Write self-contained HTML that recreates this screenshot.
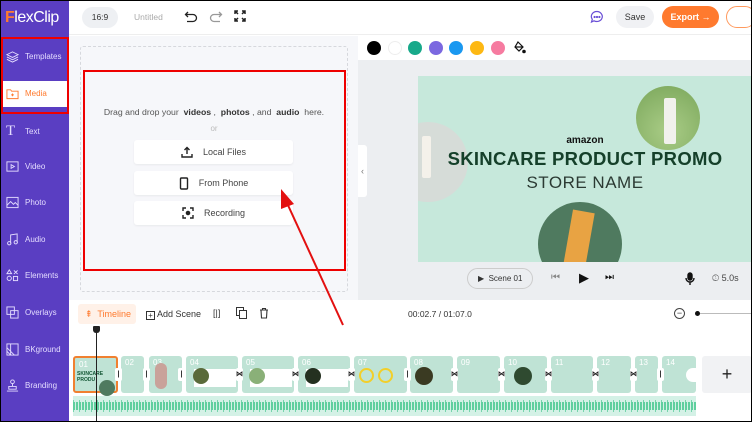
<!DOCTYPE html>
<html><head><meta charset="utf-8"><style>
*{box-sizing:border-box;margin:0;padding:0}
body{width:752px;height:422px;overflow:hidden;font-family:"Liberation Sans",sans-serif;background:#fff;position:relative;font-size:9px;color:#333}
.a{position:absolute}
.side{left:0;top:0;width:69px;height:422px;background:#5a3ec2}
.si{position:absolute;left:6px;color:#e4dcff;font-size:8px;display:flex;align-items:center;gap:6px}
.si svg{width:13px;height:13px}
.th{position:absolute;top:356px;height:37px;background:#bfe3d5;border-radius:3px}
.th span{position:absolute;left:4px;top:2px;color:#fff;font-size:8px}
.cut{position:absolute;top:368px;width:7px;height:13px;background:#fff;border-radius:2px;font-size:7px;text-align:center;line-height:13px;color:#222;font-weight:bold}
.btn{position:absolute;left:134px;width:159px;height:24px;background:#fff;border-radius:3px;box-shadow:0 1px 2px rgba(0,0,0,.06);font-size:9px;color:#444;display:flex;align-items:center;justify-content:center;gap:10px}
.dot{position:absolute;top:41px;width:14px;height:14px;border-radius:50%}
</style></head><body>
<div class="a" style="inset:0;border:1px solid #000;z-index:20;pointer-events:none"></div>
<div class="a side"></div>
<div class="a" style="left:5px;top:9px;font-size:16px;color:#fff;letter-spacing:-0.5px"><span style="color:#ff7a2e;font-weight:bold">F</span>lexClip</div>
<div class="a" style="left:3px;top:81px;width:64px;height:26px;background:#fff"></div>
<div class="si" style="top:50px"><svg viewBox="0 0 14 14" fill="none" stroke="#e4dcff"><path d="M7 2L13 5 7 8 1 5z M1 7.5L7 10.5 13 7.5 M1 10L7 13 13 10"/></svg>Templates</div>
<div class="si" style="top:87px;color:#ff7a2e"><svg viewBox="0 0 14 14" fill="none" stroke="#ff7a2e"><path d="M1 3h4l1 1.5h7v8H1z M7 7v3 M5.5 8.5h3"/></svg>Media</div>
<div class="si" style="top:123px"><span style="font-size:15px;font-family:'Liberation Serif';width:13px">T</span>Text</div>
<div class="si" style="top:160px"><svg viewBox="0 0 14 14" fill="none" stroke="#e4dcff"><rect x="1" y="2" width="12" height="10"/><path d="M5.5 5v4l3.5-2z"/></svg>Video</div>
<div class="si" style="top:196px"><svg viewBox="0 0 14 14" fill="none" stroke="#e4dcff"><rect x="1" y="1.5" width="12" height="11"/><path d="M1 10l4-4 3 3 2-2 3 3"/></svg>Photo</div>
<div class="si" style="top:233px"><svg viewBox="0 0 14 14" fill="none" stroke="#e4dcff"><path d="M5 11V2l7-1v9"/><circle cx="3.5" cy="11" r="1.8"/><circle cx="10.5" cy="10" r="1.8"/></svg>Audio</div>
<div class="si" style="top:269px"><svg viewBox="0 0 14 14" fill="none" stroke="#e4dcff"><path d="M3.5 1L6 5H1z M8.5 1.5l4 4 M12.5 1.5l-4 4"/><circle cx="3.5" cy="10" r="2.3"/><rect x="8" y="8" width="4.5" height="4.5"/></svg>Elements</div>
<div class="si" style="top:306px"><svg viewBox="0 0 14 14" fill="none" stroke="#e4dcff"><rect x="1" y="1" width="8" height="8"/><rect x="5" y="5" width="8" height="8"/></svg>Overlays</div>
<div class="si" style="top:343px"><svg viewBox="0 0 14 14" fill="none" stroke="#e4dcff"><rect x="1" y="1" width="12" height="12"/><path d="M1 5l8 8 M1 9l4 4 M5 1v12"/></svg>BKground</div>
<div class="si" style="top:379px"><svg viewBox="0 0 14 14" fill="none" stroke="#e4dcff"><circle cx="7" cy="3" r="2"/><path d="M7 5v3 M3 8h8v3H3z M1 13h12"/></svg>Branding</div>
<div class="a" style="left:1px;top:37px;width:68px;height:77px;border:2px solid #e00"></div>
<div class="a" style="left:69px;top:0;width:683px;height:35px;background:#fff;border-bottom:1px solid #eee"></div>
<div class="a" style="left:82px;top:7px;width:36px;height:21px;background:#eef0f3;border-radius:11px;font-size:8.5px;text-align:center;line-height:21px;color:#333">16:9</div>
<div class="a" style="left:134px;top:12px;color:#aaa;font-size:8.5px">Untitled</div>
<svg class="a" style="left:184px;top:10px" width="14" height="14" viewBox="0 0 14 14" fill="none" stroke="#222" stroke-width="1.3"><path d="M4 2L1.5 4.5 4 7 M1.5 4.5H9a3.5 3.5 0 010 7H3"/></svg>
<svg class="a" style="left:209px;top:10px" width="14" height="14" viewBox="0 0 14 14" fill="none" stroke="#999" stroke-width="1.3"><path d="M10 2l2.5 2.5L10 7 M12.5 4.5H5a3.5 3.5 0 000 7h6"/></svg>
<svg class="a" style="left:234px;top:10px" width="12" height="12" viewBox="0 0 12 12" fill="none" stroke="#222" stroke-width="1.5"><path d="M1 4V1h3 M8 1h3v3 M11 8v3H8 M4 11H1V8 M1 1l3 3 M11 1L8 4 M11 11L8 8 M1 11l3-3"/></svg>
<svg class="a" style="left:590px;top:10px" width="14" height="14" viewBox="0 0 14 14" fill="none" stroke="#6a4fd6" stroke-width="1.2"><path d="M7 1.5a5.5 5 0 11-3 9.3L1.5 12l.8-2.7A5.5 5 0 017 1.5z"/><circle cx="4.6" cy="7" r=".5" fill="#6a4fd6"/><circle cx="7" cy="7" r=".5" fill="#6a4fd6"/><circle cx="9.4" cy="7" r=".5" fill="#6a4fd6"/></svg>
<div class="a" style="left:616px;top:6px;width:38px;height:22px;background:#f0f1f4;border-radius:11px;font-size:9px;line-height:22px;text-align:center;color:#333">Save</div>
<div class="a" style="left:662px;top:6px;width:57px;height:22px;background:#ff7a2e;border-radius:11px;font-size:9px;line-height:22px;text-align:center;color:#fff;font-weight:bold">Export →</div>
<div class="a" style="left:726px;top:6px;width:30px;height:22px;border:1px solid #ff9a5e;border-radius:11px"></div>
<div class="a" style="left:69px;top:36px;width:289px;height:264px;background:#f6f7fa"></div>
<div class="a" style="left:80px;top:46px;width:268px;height:246px;border:1px dashed #d6d8dd;border-radius:3px"></div>
<div class="a" style="left:83px;top:70px;width:263px;height:201px;border:2px solid #e00"></div>
<div class="a" style="left:84px;top:107px;width:260px;text-align:center;font-size:8.7px;color:#555">Drag and drop your &nbsp;<b style="color:#333">videos</b> , &nbsp;<b style="color:#333">photos</b> , and &nbsp;<b style="color:#333">audio</b> &nbsp;here.</div>
<div class="a" style="left:84px;top:124px;width:260px;text-align:center;font-size:8px;color:#bbb">or</div>
<div class="btn" style="top:140px"><svg width="12" height="12" viewBox="0 0 12 12" fill="none" stroke="#222" stroke-width="1.4"><path d="M6 8V1.5 M3.5 4L6 1.5 8.5 4 M1 8v3h10V8"/></svg>Local Files</div>
<div class="btn" style="top:171px"><svg width="10" height="13" viewBox="0 0 10 13" fill="none" stroke="#222" stroke-width="1.4"><rect x="1.5" y="1" width="7" height="11" rx="1"/></svg>From Phone</div>
<div class="btn" style="top:201px"><svg width="12" height="12" viewBox="0 0 12 12" fill="none" stroke="#222" stroke-width="1.4"><path d="M1 4V1h3 M8 1h3v3 M11 8v3H8 M4 11H1V8"/><circle cx="6" cy="6" r="1.6" fill="#222"/></svg>Recording</div>
<div class="a" style="left:358px;top:36px;width:394px;height:264px;background:#eceef1"></div>
<div class="a" style="left:358px;top:36px;width:394px;height:24px;background:#fff"></div>
<div class="dot" style="left:367px;background:#000"></div>
<div class="dot" style="left:388px;background:#fff;border:1px solid #eee"></div>
<div class="dot" style="left:408px;background:#18a98a"></div>
<div class="dot" style="left:429px;background:#7b68e0"></div>
<div class="dot" style="left:449px;background:#1a98f0"></div>
<div class="dot" style="left:470px;background:#fdb813"></div>
<div class="dot" style="left:491px;background:#f67ba0"></div>
<svg class="a" style="left:513px;top:41px" width="13" height="13" viewBox="0 0 13 13" fill="none" stroke="#111" stroke-width="1.2"><path d="M5 1l5 5-4 4-4-4z M2 6h8"/><circle cx="11" cy="10.5" r="1.2" fill="#111"/></svg>
<div class="a" style="left:358px;top:145px;width:9px;height:52px;background:#fff;border-radius:0 3px 3px 0;font-size:9px;color:#777;line-height:52px;text-align:center">‹</div>
<div class="a" style="left:418px;top:76px;width:334px;height:186px;background:#c6e8db;overflow:hidden">
 <div class="a" style="left:-30px;top:46px;width:80px;height:80px;border-radius:50%;background:#d6dcd8"></div>
 <div class="a" style="left:4px;top:60px;width:9px;height:42px;background:#f4f1ea;border-radius:2px"></div>
 <div class="a" style="left:218px;top:10px;width:64px;height:64px;border-radius:50%;background:radial-gradient(circle at 50% 70%,#a9cc86,#7aa65a)"></div>
 <div class="a" style="left:246px;top:22px;width:12px;height:46px;background:#f1f1ec;border-radius:2px"></div>
 <div class="a" style="left:120px;top:126px;width:84px;height:84px;border-radius:50%;background:#4f7a5f"></div>
 <div class="a" style="left:150px;top:135px;width:22px;height:56px;background:#e8a343;transform:rotate(10deg)"></div>
 <div class="a" style="left:0;top:59px;width:334px;text-align:center;font-size:10px;font-weight:bold;color:#111">amazon</div>
 <div class="a" style="left:0;top:72px;width:334px;text-align:center;font-size:18.5px;font-weight:900;color:#15402a;letter-spacing:0.3px">SKINCARE PRODUCT PROMO</div>
 <div class="a" style="left:0;top:97px;width:334px;text-align:center;font-size:17px;color:#2b3a33;letter-spacing:0.5px">STORE NAME</div>
</div>
<div class="a" style="left:467px;top:268px;width:66px;height:21px;border:1px solid #ccc;border-radius:11px;font-size:8px;line-height:19px;color:#333;padding-left:10px">▶&nbsp; Scene 01</div>
<div class="a" style="left:551px;top:272px;font-size:10px;color:#888">⏮</div>
<div class="a" style="left:579px;top:270px;font-size:13px;color:#111">▶</div>
<div class="a" style="left:605px;top:272px;font-size:10px;color:#111">⏭</div>
<svg class="a" style="left:684px;top:272px" width="12" height="14" viewBox="0 0 12 14" fill="none" stroke="#111" stroke-width="1.4"><rect x="4" y="1" width="4" height="7" rx="2" fill="#111"/><path d="M2 6a4 4 0 008 0 M6 10v3"/></svg>
<div class="a" style="left:712px;top:273px;font-size:9px;color:#444">🕔︎ 5.0s</div>
<div class="a" style="left:69px;top:300px;width:683px;height:122px;background:#fff"></div>
<div class="a" style="left:78px;top:304px;width:58px;height:20px;background:#fff1e8;border-radius:3px;color:#ff7a2e;font-size:9px;line-height:20px;padding-left:7px">⇞&nbsp; Timeline</div>
<div class="a" style="left:146px;top:309px;font-size:9px;color:#333"><span style="display:inline-block;width:9px;height:9px;border:1px solid #333;font-size:8px;line-height:7px;text-align:center;vertical-align:-1px">+</span> Add Scene</div>
<div class="a" style="left:213px;top:308px;font-size:9px;color:#333">[|]</div>
<div class="a" style="left:236px;top:307px;width:8px;height:9px;border:1.2px solid #333"></div>
<div class="a" style="left:239px;top:310px;width:8px;height:9px;border:1.2px solid #333;background:#fff"></div>
<svg class="a" style="left:259px;top:307px" width="10" height="12" viewBox="0 0 10 12" fill="none" stroke="#333" stroke-width="1.1"><path d="M1 3h8 M3.5 3V1.5h3V3 M2 3l.5 8h5l.5-8"/></svg>
<div class="a" style="left:408px;top:309px;font-size:8.5px;color:#333">00:02.7 / 01:07.0</div>
<div class="a" style="left:674px;top:308px;width:11px;height:11px;border:1px solid #444;border-radius:50%;font-size:9px;line-height:9px;text-align:center">−</div>
<div class="a" style="left:695px;top:311px;width:5px;height:5px;border-radius:50%;background:#111"></div>
<div class="a" style="left:700px;top:313px;width:52px;height:1px;background:#bbb"></div>
<div class="th" style="left:73px;width:45px;border:2px solid #f08030"><span>01</span><div style="position:absolute;left:2px;top:13px;font-size:5px;font-weight:bold;color:#153">SKINCARE PRODU</div><div style="position:absolute;left:24px;top:22px;width:16px;height:16px;border-radius:50%;background:#4f7a5f"></div></div>
<div class="th" style="left:121px;width:23px"><span>02</span></div>
<div class="th" style="left:149px;width:33px"><span>03</span><div style="position:absolute;left:6px;top:7px;width:12px;height:26px;border-radius:6px;background:#c9a29a"></div></div>
<div class="th" style="left:186px;width:52px"><span>04</span><div style="position:absolute;left:8px;top:13px;width:42px;height:18px;background:#fff"></div><div style="position:absolute;left:7px;top:12px;width:16px;height:16px;border-radius:50%;background:#5a6a3a"></div></div>
<div class="th" style="left:242px;width:52px"><span>05</span><div style="position:absolute;left:8px;top:13px;width:42px;height:18px;background:#fff"></div><div style="position:absolute;left:7px;top:12px;width:16px;height:16px;border-radius:50%;background:#8ab078"></div></div>
<div class="th" style="left:298px;width:52px"><span>06</span><div style="position:absolute;left:8px;top:13px;width:42px;height:18px;background:#fff"></div><div style="position:absolute;left:7px;top:12px;width:16px;height:16px;border-radius:50%;background:#243020"></div></div>
<div class="th" style="left:354px;width:53px"><span>07</span><div style="position:absolute;left:5px;top:12px;width:15px;height:15px;border-radius:50%;border:2px solid #f2cf2a"></div><div style="position:absolute;left:24px;top:12px;width:15px;height:15px;border-radius:50%;border:2px solid #f2cf2a"></div></div>
<div class="th" style="left:410px;width:43px"><span>08</span><div style="position:absolute;left:5px;top:11px;width:18px;height:18px;border-radius:50%;background:#3a3a22"></div></div>
<div class="th" style="left:457px;width:43px"><span>09</span></div>
<div class="th" style="left:504px;width:43px"><span>10</span><div style="position:absolute;left:10px;top:11px;width:18px;height:18px;border-radius:50%;background:#2f4a30"></div></div>
<div class="th" style="left:551px;width:42px"><span>11</span></div>
<div class="th" style="left:597px;width:34px"><span>12</span></div>
<div class="th" style="left:635px;width:23px"><span>13</span></div>
<div class="th" style="left:662px;width:34px"><span>14</span><div style="position:absolute;left:24px;top:12px;width:12px;height:14px;border-radius:7px 0 0 7px;background:#fff"></div></div>
<div class="a" style="left:702px;top:356px;width:50px;height:37px;background:#f1f2f4;border-radius:3px;font-size:18px;text-align:center;line-height:37px;color:#222">+</div>
<div class="cut" style="left:115px">|</div><div class="cut" style="left:143px">|</div><div class="cut" style="left:178px">|</div><div class="cut" style="left:236px">⋈</div><div class="cut" style="left:292px">⋈</div><div class="cut" style="left:348px">⋈</div><div class="cut" style="left:404px">|</div><div class="cut" style="left:451px">⋈</div><div class="cut" style="left:498px">⋈</div><div class="cut" style="left:545px">⋈</div><div class="cut" style="left:592px">⋈</div><div class="cut" style="left:630px">⋈</div><div class="cut" style="left:657px">|</div>
<div class="a" style="left:73px;top:396px;width:623px;height:20px;background:#d4f1e6"></div>
<svg class="a" style="left:73px;top:396px" width="623" height="20"><path d="M0 10 L623 10" stroke="#5fcf9e" stroke-width="8" stroke-dasharray="2 1"/><path d="M0 10 L623 10" stroke="#5fcf9e" stroke-width="12" stroke-dasharray="1 5" opacity=".8"/></svg>
<div class="a" style="left:96px;top:330px;width:1px;height:92px;background:#222"></div>
<div class="a" style="left:93px;top:326px;width:7px;height:7px;background:#222;border-radius:1px 1px 3px 3px"></div>
<svg class="a" style="left:0;top:0;z-index:10" width="752" height="422"><line x1="343" y1="325" x2="287" y2="203" stroke="#e31010" stroke-width="2"/><path d="M281 189 L294 204 L281 209 Z" fill="#e31010"/></svg>
</body></html>
